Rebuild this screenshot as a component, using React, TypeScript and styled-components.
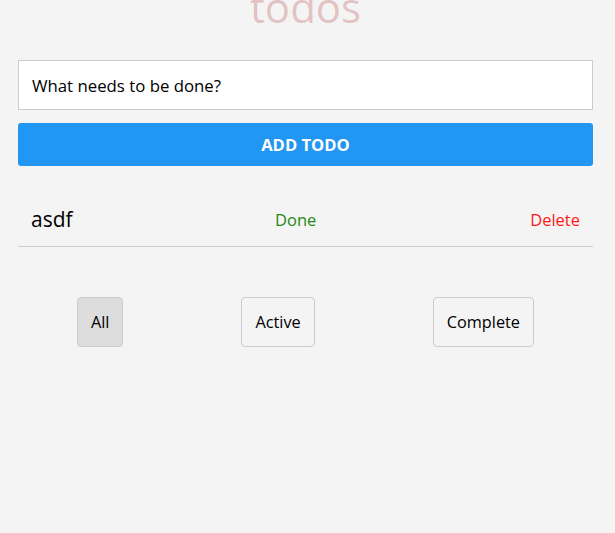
import React, { useState } from "react"
import styled, { createGlobalStyle } from 'styled-components';

interface Todo {
  id: number;
  text: string;
  done: boolean;
}

type Filter = 'all' | 'active' | 'complete';

const GlobalStyle = createGlobalStyle`
  html, body {
    margin: 0;
    padding: 0;
    background-color: #f4f4f4;
    font-family: "Open Sans", "Noto Sans", sans-serif;
  }
`;

const Container = styled.div`
  width: 575px;
  margin: 0 0 0 18px;
  display: flex;
  flex-direction: column;
`;

const Title = styled.h1`
  margin: -24px 0 0;
  text-align: center;
  font-size: 42px;
  font-weight: 400;
  line-height: 62px;
  color: rgba(175, 47, 47, 0.25);
`;

const Input = styled.input`
  box-sizing: border-box;
  height: 50px;
  margin-top: 22px;
  width: 100%;
  padding: 0 13px;
  border: 1px solid #ccc;
  background-color: #fff;
  font-family: inherit;
  font-size: 16.8px;
  color: #000;

  &::placeholder {
    color: #000;
  }

  &:focus {
    outline: none;
  }
`;

const AddButton = styled.button`
  height: 43px;
  margin-top: 13px;
  border: none;
  border-radius: 3px;
  background-color: #2196f3;
  color: #fff;
  font-family: inherit;
  font-size: 16.6px;
  font-weight: 700;
  cursor: pointer;
`;

const List = styled.ul`
  margin: 26px 0 0;
  padding: 0;
  list-style: none;
`;

const Item = styled.li`
  display: grid;
  grid-template-columns: 244px auto 1fr;
  align-items: center;
  height: 54px;
  padding: 0 13px;
  border-bottom: 1px solid #ccc;
`;

const ItemText = styled.span<{ $done: boolean }>`
  font-size: 21px;
  color: #000;
  text-decoration: ${({ $done }) => ($done ? 'line-through' : 'none')};
`;

const LinkButton = styled.button<{ $tone: string; $end?: boolean }>`
  justify-self: ${({ $end }) => ($end ? 'end' : 'start')};
  border: none;
  background: none;
  padding: 0;
  font-family: inherit;
  font-size: 16.5px;
  color: ${({ $tone }) => $tone};
  cursor: pointer;
`;

const Filters = styled.div`
  display: flex;
  justify-content: space-around;
  margin-top: 50px;
`;

const FilterButton = styled.button<{ $active: boolean }>`
  height: 50px;
  padding: 0 13px;
  border: 1px solid #ccc;
  border-radius: 4px;
  background-color: ${({ $active }) => ($active ? '#dddddd' : '#f4f4f4')};
  font-family: inherit;
  font-size: 16.3px;
  color: #000;
  cursor: pointer;
`;

const App = (): JSX.Element => {
  const [todos, setTodos] = useState<Todo[]>([{ id: 1, text: 'asdf', done: false }]);
  const [value, setValue] = useState('');
  const [filter, setFilter] = useState<Filter>('all');

  const addTodo = () => {
    if (!value.trim()) return;
    setTodos([...todos, { id: Date.now(), text: value, done: false }]);
    setValue('');
  };

  const visible = todos.filter((t) =>
    filter === 'all' ? true : filter === 'active' ? !t.done : t.done
  );

  return (
    <>
      <GlobalStyle />
      <Container>
        <Title>todos</Title>
        <Input
          placeholder="What needs to be done?"
          value={value}
          onChange={(e) => setValue(e.target.value)}
        />
        <AddButton onClick={addTodo}>ADD TODO</AddButton>
        <List>
          {visible.map((t) => (
            <Item key={t.id}>
              <ItemText $done={t.done}>{t.text}</ItemText>
              <LinkButton
                $tone="#1f8a12"
                onClick={() => setTodos(todos.map((x) => (x.id === t.id ? { ...x, done: !x.done } : x)))}
              >
                Done
              </LinkButton>
              <LinkButton $tone="#ff1a1a" $end onClick={() => setTodos(todos.filter((x) => x.id !== t.id))}>
                Delete
              </LinkButton>
            </Item>
          ))}
        </List>
        <Filters>
          <FilterButton $active={filter === 'all'} onClick={() => setFilter('all')}>All</FilterButton>
          <FilterButton $active={filter === 'active'} onClick={() => setFilter('active')}>Active</FilterButton>
          <FilterButton $active={filter === 'complete'} onClick={() => setFilter('complete')}>Complete</FilterButton>
        </Filters>
      </Container>
    </>
  );
};

export default App;
